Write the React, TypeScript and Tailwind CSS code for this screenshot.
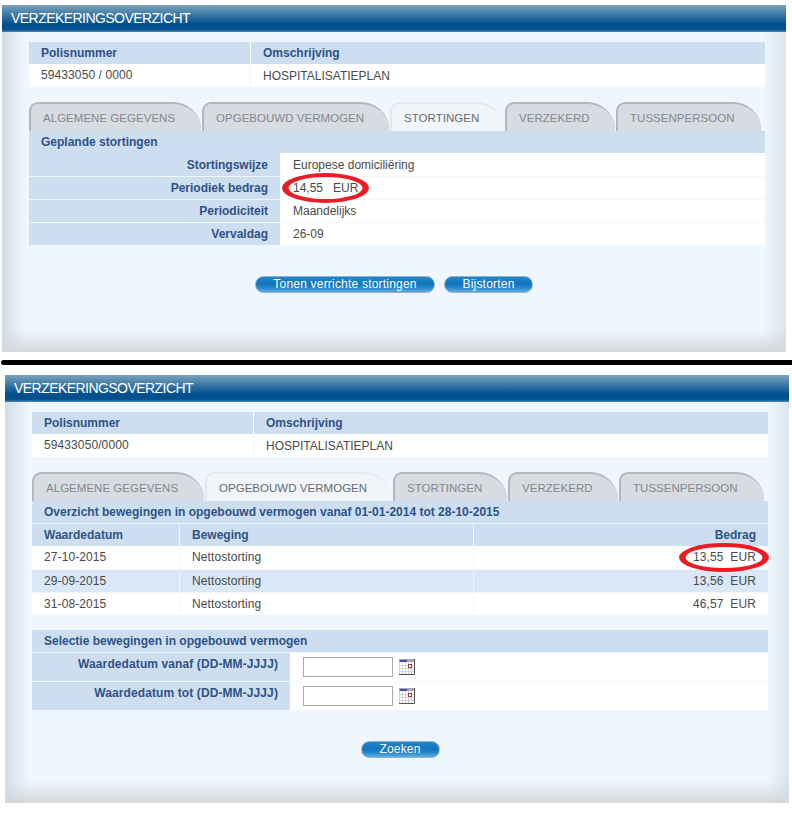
const fontClass = "font-['Liberation_Sans',Arial,sans-serif]";

type Tab = { label: string; width: string };

const tabs: Tab[] = [
  { label: 'ALGEMENE GEGEVENS', width: 'w-[172px]' },
  { label: 'OPGEBOUWD VERMOGEN', width: 'w-[187px]' },
  { label: 'STORTINGEN', width: 'w-[114px]' },
  { label: 'VERZEKERD', width: 'w-[110px]' },
  { label: 'TUSSENPERSOON', width: 'w-[145px]' },
];

function TabBar({ active }: { active: string }) {
  return (
    <div className="mt-[15px] flex h-[29px] gap-px">
      {tabs.map((tab) => (
        <div
          key={tab.label}
          className={`${tab.width} flex items-start rounded-tl-[9px] rounded-tr-[28px_27px] border-t-2 border-l-2 pt-[6px] pl-[12px] text-[11.5px] leading-[16px] tracking-[0.03px] ${
            tab.label === active
              ? 'border-[#e4e9ef] bg-[#f1f5f9] text-[#666b70]'
              : 'border-[#b4b8bd] bg-[#d7dbe2] text-[#85888c]'
          }`}
        >
          {tab.label}
        </div>
      ))}
    </div>
  );
}

function PolicyHeader({ number }: { number: string }) {
  return (
    <div className="text-[12px]">
      <div className="flex h-[22px] items-center bg-[#cddef0] font-bold text-[#2f5288]">
        <div className="h-full w-[222px] border-r border-white pl-[12px] leading-[22px]">Polisnummer</div>
        <div className="pl-[12px]">Omschrijving</div>
      </div>
      <div className="flex h-[23px] items-center bg-white text-[#4a4a4a]">
        <div className="h-full w-[222px] border-r border-[#eff6fe] pl-[12px] leading-[23px] tracking-[0.1px]">{number}</div>
        <div className="pl-[12px]">HOSPITALISATIEPLAN</div>
      </div>
    </div>
  );
}

function SectionTitle({ children }: { children: string }) {
  return (
    <div className="h-[22px] bg-[#cddef0] pl-[12px] text-[12px] leading-[22px] font-bold text-[#2f5288]">
      {children}
    </div>
  );
}

function BlueButton({ label, width }: { label: string; width: string }) {
  return (
    <div
      className={`${width} h-[17px] rounded-full border border-[#8fb2cc] bg-[linear-gradient(to_bottom,#1f86cb_0%,#1475bb_45%,#1c82c8_65%,#5cace0_100%)] text-center text-[12px] leading-[14px] tracking-[0.2px] text-white`}
    >
      {label}
    </div>
  );
}

function CalendarIcon() {
  return (
    <svg width="16" height="16" viewBox="0 0 16 16" className="shrink-0">
      <rect x="0" y="0" width="16" height="16" fill="#ffffff" />
      <rect x="0" y="0" width="16" height="3" fill="#a8a8a8" />
      <rect x="1" y="1" width="7" height="2" fill="#4848b0" />
      <path
        d="M0.5 3V15M3.5 3V15M6.5 3V15M9.5 3V15M12.5 3V15M0 6.5H15M0 9.5H15M0 12.5H15"
        stroke="#d4d4d4"
        strokeWidth="1"
      />
      <rect x="9.5" y="5.5" width="3" height="3" fill="#ffffff" stroke="#a83a3a" />
      <path d="M15.5 0V15.5H0" fill="none" stroke="#505050" />
    </svg>
  );
}

function Panel({ height, children }: { height: string; children: React.ReactNode }) {
  return (
    <section
      className={`${height} w-[784px] bg-[linear-gradient(to_top,#d3d8dc,#d3d8dc00_22px),linear-gradient(to_right,#d4dde7,#eff6fe_24px,#eff6fe_calc(100%-22px),#dbe3ec)]`}
    >
      <h1 className="h-[27px] bg-[linear-gradient(to_bottom,#7ba3bd_0%,#3e7aa3_35%,#03508f_70%,#03508f_90%,#4f86b0_100%)] pl-[9px] text-[14px] leading-[26px] font-normal tracking-[-0.55px] text-white">
        VERZEKERINGSOVERZICHT
      </h1>
      <div className="ml-[27px] w-[736px] pt-[10px]">{children}</div>
    </section>
  );
}

const plannedRows = [
  ['Stortingswijze', 'Europese domiciliëring'],
  ['Periodiek bedrag', '14,55   EUR'],
  ['Periodiciteit', 'Maandelijks'],
  ['Vervaldag', '26-09'],
];

const movements = [
  ['27-10-2015', '13,55'],
  ['29-09-2015', '13,56'],
  ['31-08-2015', '46,57'],
];

// hand-drawn marker ring: thicker at the sides than at top and bottom
function RedEllipse({ className, rx, ry }: { className: string; rx: number; ry: number }) {
  const w = rx * 2;
  const h = ry * 2;
  const irx = rx - 6.5;
  const iry = ry - 4;
  const d =
    `M0 ${ry}A${rx} ${ry} 0 1 1 ${w} ${ry}A${rx} ${ry} 0 1 1 0 ${ry}Z` +
    `M${rx - irx} ${ry}A${irx} ${iry} 0 1 0 ${rx + irx} ${ry}A${irx} ${iry} 0 1 0 ${rx - irx} ${ry}Z`;
  return (
    <svg width={w} height={h} viewBox={`0 0 ${w} ${h}`} className={`absolute ${className}`}>
      <path d={d} fill="#ed1c24" fillRule="evenodd" />
    </svg>
  );
}

export default function App() {
  return (
    <div className={`${fontClass} relative h-[818px] w-[792px] overflow-hidden bg-white pt-[5px]`}>
      <div className="ml-[2px]">
        <Panel height="h-[347px]">
          <PolicyHeader number="59433050 / 0000" />
          <TabBar active="STORTINGEN" />
          <SectionTitle>Geplande stortingen</SectionTitle>
          <div className="text-[12px]">
            {plannedRows.map(([label, value], i) => (
              <div
                key={label}
                className={`flex h-[23px] bg-white ${i > 0 ? 'border-t border-[#eff6fe] leading-[22px]' : 'leading-[24px]'}`}
              >
                <div className="w-[252px] border-r border-white bg-[#cddef0] pr-[12px] text-right font-bold text-[#2f5288]">
                  {label}
                </div>
                <div className="whitespace-pre pl-[12px] text-[#4a4a4a]">{value}</div>
              </div>
            ))}
          </div>
          <div className="mt-[31px] flex gap-[9px] pl-[226px]">
            <BlueButton label="Tonen verrichte stortingen" width="w-[180px]" />
            <BlueButton label="Bijstorten" width="w-[89px]" />
          </div>
        </Panel>
      </div>

      <div className="mt-[8px] ml-[1px] h-[5px] rounded-l-full bg-black" />

      <div className="mt-[10px] ml-[5px]">
        <Panel height="h-[428px]">
          <PolicyHeader number="59433050/0000" />
          <TabBar active="OPGEBOUWD VERMOGEN" />
          <SectionTitle>Overzicht bewegingen in opgebouwd vermogen vanaf 01-01-2014 tot 28-10-2015</SectionTitle>
          <div className="text-[12px]">
            <div className="flex h-[23px] border-t border-[#eff6fe] bg-[#cddef0] leading-[22px] font-bold text-[#2f5288]">
              <div className="w-[148px] border-r border-[#eff6fe] pl-[12px]">Waardedatum</div>
              <div className="w-[294px] border-r border-[#eff6fe] pl-[12px]">Beweging</div>
              <div className="flex-1 pr-[12px] text-right">Bedrag</div>
            </div>
            {movements.map(([date, amount], i) => (
              <div
                key={date}
                className={`flex h-[23px] leading-[22px] tracking-[0.1px] text-[#4a4a4a] ${
                  i > 0 ? 'border-t border-[#eff6fe]' : ''
                } ${i % 2 === 1 ? 'bg-[#d9e7f6]' : 'bg-white'}`}
              >
                <div className="w-[148px] border-r border-[#eff6fe] pl-[12px]">{date}</div>
                <div className="w-[294px] border-r border-[#eff6fe] pl-[12px]">Nettostorting</div>
                <div className="flex-1 whitespace-pre pr-[12px] text-right">{amount}  EUR</div>
              </div>
            ))}
          </div>
          <div className="mt-[15px]">
            <SectionTitle>Selectie bewegingen in opgebouwd vermogen</SectionTitle>
          </div>
          <div className="text-[12px]">
            {['Waardedatum vanaf (DD-MM-JJJJ)', 'Waardedatum tot (DD-MM-JJJJ)'].map((label) => (
              <div key={label} className="flex h-[29px] border-t border-[#eff6fe] bg-white">
                <div className="w-[259px] border-r border-white bg-[#cddef0] pr-[12px] text-right leading-[22px] font-bold tracking-[0.1px] text-[#2f5288]">
                  {label}
                </div>
                <div className="flex items-center gap-[6px] pl-[12px]">
                  <div className="h-[20px] w-[90px] border border-[#aaaaaa] bg-white" />
                  <CalendarIcon />
                </div>
              </div>
            ))}
          </div>
          <div className="mt-[31px] flex justify-center">
            <BlueButton label="Zoeken" width="w-[79px]" />
          </div>
        </Panel>
      </div>

      <RedEllipse className="top-[173px] left-[282px]" rx={43.5} ry={15} />
      <RedEllipse className="top-[543px] left-[679px]" rx={45} ry={14.5} />
    </div>
  );
}
